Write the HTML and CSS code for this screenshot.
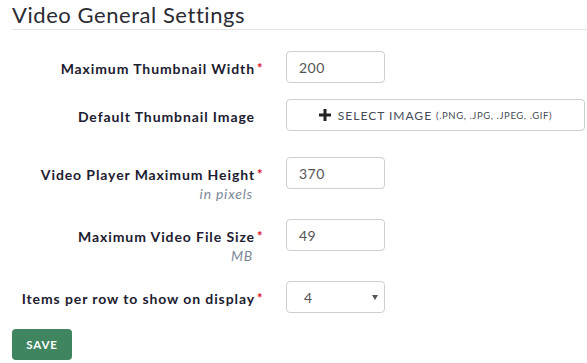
FILE: index.html
```html
<!DOCTYPE html>
<html>
<head>
<meta charset="utf-8">
<link rel="stylesheet" href="styles.css">
</head>
<body>
<div class="page">
  <h2 class="title">Video General Settings</h2>
  <form class="form">
    <div class="row">
      <div class="label-col"><label class="label req">Maximum Thumbnail Width</label></div>
      <div class="field"><input class="input" type="text" value="200"></div>
    </div>
    <div class="row row-btn">
      <div class="label-col"><label class="label">Default Thumbnail Image</label></div>
      <div class="field field-wide">
        <button type="button" class="select-btn">
          <svg class="plus" width="12" height="12" viewBox="0 0 12 12"><path d="M4.5 0h3v4.5H12v3H7.5V12h-3V7.5H0v-3h4.5z" fill="#222"/></svg>
          <span class="btn-main">SELECT IMAGE</span>
          <span class="btn-sub">(.PNG, .JPG, .JPEG, .GIF)</span>
        </button>
      </div>
    </div>
    <div class="row row-help">
      <div class="label-col">
        <label class="label req">Video Player Maximum Height</label>
        <div class="help">in pixels</div>
      </div>
      <div class="field"><input class="input" type="text" value="370"></div>
    </div>
    <div class="row row-help">
      <div class="label-col">
        <label class="label req">Maximum Video File Size</label>
        <div class="help">MB</div>
      </div>
      <div class="field"><input class="input" type="text" value="49"></div>
    </div>
    <div class="row">
      <div class="label-col"><label class="label req">Items per row to show on display</label></div>
      <div class="field">
        <div class="select">
          <span class="select-val">4</span>
          <span class="caret"></span>
        </div>
      </div>
    </div>
    <button type="button" class="save">SAVE</button>
  </form>
</div>
</body>
</html>
```

FILE: styles.css
```css
* { box-sizing: border-box; }
html, body { margin: 0; padding: 0; background: #fff; }
body { font-family: "Lato", "Noto Sans", sans-serif; color: #1f2330; }
.page { padding: 0 0 0 12px; }
.title {
  margin: 0;
  font-weight: 400;
  font-size: 22px;
  line-height: 24px;
  padding-top: 3px;
  height: 30px;
  color: #2b2b33;
  border-bottom: 1px solid #e3e3e3;
  letter-spacing: 0.55px;
}
.form { padding-top: 21px; }
.row { display: flex; align-items: flex-start; height: 32px; margin-bottom: 16px; }
.row-btn { margin-bottom: 26px; }
.row-help { margin-bottom: 30px; }
.label-col {
  width: 274px;
  height: 32px;
  padding-right: 31px;
  text-align: right;
  padding-top: 7px;
}
.label {
  position: relative;
  display: inline-block;
  font-weight: 700;
  font-size: 14px;
  line-height: 17px;
  letter-spacing: 0.9px;
  color: #1c2030;
}
.label.req::after {
  content: "*";
  position: absolute;
  left: 100%;
  top: 0;
  margin-left: 2px;
  color: #e0102a;
  font-size: 13px;
}
.help {
  font-style: italic;
  font-size: 14px;
  line-height: 16px;
  color: #7b8898;
  margin-top: 3px;
  padding-right: 2px;
  letter-spacing: 0.8px;
}
.input {
  width: 99px;
  height: 32px;
  border: 1px solid #cfcfcf;
  border-radius: 4px;
  padding: 0 12px;
  font-family: "Lato", "Noto Sans", sans-serif;
  font-size: 14px;
  color: #555;
  letter-spacing: 0.5px;
  outline: none;
}
.field-wide { flex: 0 0 auto; }
.select-btn {
  width: 299px;
  height: 32px;
  border: 1px solid #cfcfcf;
  border-radius: 4px;
  background: #fff;
  display: flex;
  align-items: center;
  justify-content: center;
  padding: 0;
  font-family: "Lato", "Noto Sans", sans-serif;
  color: #444a56;
}
.plus { margin-right: 7px; margin-top: -1px; }
.btn-main { font-size: 12px; letter-spacing: 1px; }
.btn-sub { font-size: 9.5px; letter-spacing: 0.6px; margin-left: 4px; margin-top: 1px; }
.select {
  width: 99px;
  height: 32px;
  border: 1px solid #cfcfcf;
  border-radius: 4px;
  display: flex;
  align-items: center;
  padding: 0 6px 0 17px;
  font-size: 14px;
  color: #555;
}
.select-val { flex: 1; }
.caret {
  width: 0; height: 0;
  border-left: 3px solid transparent;
  border-right: 3px solid transparent;
  border-top: 5px solid #555;
}
.save {
  display: block;
  width: 60px;
  height: 31px;
  border: none;
  border-radius: 4px;
  background: #3f8660;
  color: #fff;
  font-family: "Lato", "Noto Sans", sans-serif;
  font-weight: 700;
  font-size: 11.5px;
  letter-spacing: 0.8px;
  padding: 0;
}
```
